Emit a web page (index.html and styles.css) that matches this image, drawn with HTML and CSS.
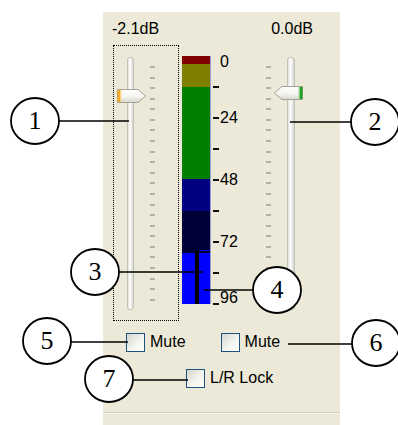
FILE: index.html
```html
<html>
<head>
<meta charset="utf-8" />
<title>Mixer</title>
<link rel="stylesheet" href="styles.css">
</head>
<body>

<div class="panel">
	<div class="levels"><span>-2.1dB</span><span>0.0dB</span></div>

	<div class="mixer">
		<div class="channel focus">
			<div class="track"></div>
			<div class="ticks">
				<i></i><i></i><i></i><i></i><i></i><i></i><i></i><i></i><i></i><i></i><i></i><i></i>
				<i></i><i></i><i></i><i></i><i></i><i></i><i></i><i></i><i></i><i></i><i></i>
			</div>
			<svg class="thumb thumb-left" width="31" height="16" viewBox="0 0 31 16">
				<defs>
					<linearGradient id="tg" x1="0" y1="0" x2="0" y2="1">
						<stop offset="0" stop-color="#ffffff"/>
						<stop offset="0.6" stop-color="#f2f2ee"/>
						<stop offset="1" stop-color="#d6d5cc"/>
					</linearGradient>
				</defs>
				<path d="M1.5 1.5 H22 L29.5 8 L22 14.5 H1.5 Z" fill="url(#tg)" stroke="#a3a39a"/>
				<rect x="1.5" y="2" width="3" height="12" fill="#f6a827"/>
				<rect x="4.5" y="2" width="1" height="12" fill="#ffd98a"/>
			</svg>
		</div>

		<div class="meter">
			<div class="seg red"></div>
			<div class="seg olive"></div>
			<div class="seg green"></div>
			<div class="seg navy"></div>
			<div class="seg dark"></div>
			<div class="seg low">
				<div class="ch left-ch"></div>
				<div class="ch gap"></div>
				<div class="ch right-ch"></div>
			</div>
		</div>

		<div class="scale">
			<div class="zero">0</div>
			<div class="step first"><span class="mark"></span></div>
			<div class="step"><span class="mark">24</span></div>
			<div class="step"><span class="mark"></span></div>
			<div class="step"><span class="mark">48</span></div>
			<div class="step"><span class="mark"></span></div>
			<div class="step"><span class="mark">72</span></div>
			<div class="step"><span class="mark"></span></div>
			<div class="step last"><span class="mark">96</span></div>
		</div>

		<div class="channel right">
			<div class="ticks">
				<i></i><i></i><i></i><i></i><i></i><i></i><i></i><i></i><i></i><i></i><i></i><i></i>
				<i></i><i></i><i></i><i></i><i></i><i></i><i></i><i></i><i></i><i></i><i></i>
			</div>
			<div class="track"></div>
			<svg class="thumb thumb-right" width="31" height="16" viewBox="0 0 31 16">
				<path d="M29.5 1.5 H9 L1.5 8 L9 14.5 H29.5 Z" fill="url(#tg)" stroke="#a3a39a"/>
				<rect x="26.5" y="2" width="3" height="12" fill="#21a121"/>
				<rect x="25.5" y="2" width="1" height="12" fill="#8fd88f"/>
			</svg>
		</div>
	</div>

	<div class="checks">
		<label class="check"><span class="box"></span>Mute</label>
		<label class="check"><span class="box"></span>Mute</label>
	</div>
	<div class="checks lock">
		<label class="check"><span class="box"></span>L/R Lock</label>
	</div>

	<div class="sep"></div>
</div>

<!-- callout annotations -->
<svg class="callouts" width="398" height="425" viewBox="0 0 398 425">
	<g stroke="#000" stroke-width="1.5">
		<line x1="59" y1="121" x2="129" y2="121"/>
		<line x1="290" y1="122" x2="351" y2="122"/>
		<line x1="119" y1="272" x2="203" y2="272"/>
		<line x1="204" y1="290" x2="253" y2="290"/>
		<line x1="71" y1="342" x2="128" y2="342"/>
		<line x1="288" y1="344" x2="352" y2="344"/>
		<line x1="133" y1="380" x2="188" y2="380"/>
	</g>
	<g fill="#fff" stroke="#000" stroke-width="1.8">
		<ellipse cx="35" cy="121" rx="24" ry="23"/>
		<ellipse cx="375" cy="122" rx="24" ry="23"/>
		<ellipse cx="95" cy="272" rx="24" ry="23"/>
		<ellipse cx="277" cy="290" rx="24" ry="23"/>
		<ellipse cx="47" cy="341" rx="24" ry="23"/>
		<ellipse cx="376" cy="343" rx="24" ry="23"/>
		<ellipse cx="109" cy="379" rx="24" ry="23"/>
	</g>
	<g class="nums" text-anchor="middle">
		<text x="35" y="129">1</text>
		<text x="375" y="130">2</text>
		<text x="95" y="280">3</text>
		<text x="277" y="298">4</text>
		<text x="47" y="349">5</text>
		<text x="376" y="351">6</text>
		<text x="109" y="387">7</text>
	</g>
</svg>

</body>
</html>
```

FILE: styles.css
```css
body{
	margin: 0;
	padding-top: 12px;
	background: #fff;
	font-family: "Liberation Sans", Arial, sans-serif;
	font-size: 16px;
	color: #000;
	overflow: hidden;
}

.panel{
	margin-left: 103px;
	width: 237px;
	height: 413px;
	background: #ece9d8;
}

.levels{
	display: flex;
	justify-content: space-between;
	padding: 8px 27px 0 9px;
	line-height: 18px;
}

.mixer{
	display: flex;
	align-items: flex-start;
	margin-top: 7px;
}

.channel{
	position: relative;
	display: flex;
	align-items: flex-start;
}

.focus{
	box-sizing: border-box;
	width: 66px;
	height: 276px;
	margin-left: 10px;
	padding: 11px 0 0 13px;
	border: 1px dotted #000;
}

.track{
	box-sizing: border-box;
	width: 7px;
	height: 253px;
	border: 1px solid #c2c1ba;
	border-radius: 3px;
	background: linear-gradient(to right, #e4e3dc, #fff 45%, #d4d3cc);
}

.ticks{
	display: flex;
	flex-direction: column;
	justify-content: space-between;
	width: 5px;
	height: 235px;
}

.ticks i{
	height: 2px;
	background: #b3b1a6;
}

.focus .ticks{
	margin: 9px 0 0 16px;
}

.right{
	margin-left: 18px;
}

.right .ticks{
	margin-top: 21px;
}

.right .track{
	width: 8px;
	margin: 12px 0 0 16px;
}

.thumb{
	position: absolute;
}

.thumb-left{
	left: 2px;
	top: 42px;
}

.thumb-right{
	left: 7px;
	top: 40px;
}

.meter{
	display: flex;
	flex-direction: column;
	width: 28px;
	height: 248px;
	margin: 11px 0 0 3px;
	border-right: 1px solid #9c9cd8;
}

.seg.red{ height: 8px; background: #800000; }
.seg.olive{ height: 23px; background: #808000; }
.seg.green{ height: 92px; background: #008000; }
.seg.navy{ height: 32px; background: #000080; }
.seg.dark{ height: 39px; background: #000036; }

.seg.low{
	display: flex;
	height: 54px;
}

.ch.left-ch{
	width: 13px;
	background: #0000ff;
	border-top: 3px solid #000036;
}

.ch.gap{
	width: 4px;
	background: #000;
}

.ch.right-ch{
	width: 11px;
	background: linear-gradient(#0000ff 0 1px, #000030 1px 3px, #0000ff 3px);
}

.scale{
	display: flex;
	flex-direction: column;
	width: 35px;
	margin: 11px 0 0 2px;
}

.zero{
	height: 12px;
	line-height: 12px;
	padding-left: 7px;
}

.step{
	display: flex;
	align-items: flex-end;
	height: 31px;
}

.step.first{
	height: 19px;
}

.mark{
	display: flex;
	align-items: center;
	gap: 1px;
	height: 16px;
	line-height: 16px;
	margin-bottom: -8px;
}

.mark::before{
	content: "";
	width: 6px;
	height: 2px;
	background: #111;
}

.step.last .mark{
	align-items: flex-end;
	margin-bottom: -2px;
}

.step.last .mark::before{
	margin-bottom: 1px;
}

.checks{
	display: flex;
	gap: 35px;
	margin-top: 11px;
	padding-left: 23px;
}

.checks.lock{
	margin-top: 16px;
	padding-left: 83px;
}

.check{
	display: flex;
	align-items: center;
	gap: 5px;
	height: 20px;
}

.box{
	box-sizing: border-box;
	width: 19px;
	height: 19px;
	border: 1px solid #1c5180;
	background: linear-gradient(135deg, #d6d5cc, #f4f4f0 55%, #fff);
}

.sep{
	margin-top: 24px;
	height: 1px;
	background: #d0cdbe;
	border-bottom: 1px solid #f8f7f2;
}

.callouts{
	position: absolute;
	left: 0;
	top: 0;
}

.nums text{
	font-family: "Liberation Serif", "DejaVu Serif", serif;
	font-size: 26px;
	fill: #000;
}
```
